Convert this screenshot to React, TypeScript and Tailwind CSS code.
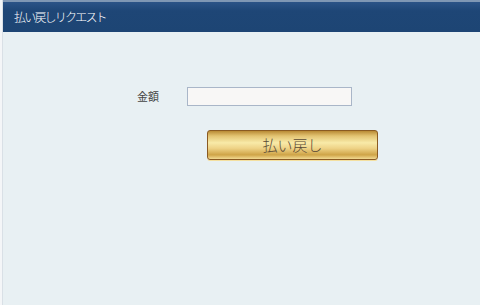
export default function App() {
  return (
    <div
      className="flex h-[305px] w-[480px] bg-[#e8f0f3]"
      style={{ fontFamily: '"Noto Sans CJK JP", "Liberation Sans", sans-serif' }}
    >
      {/* left edge strip */}
      <div className="w-[3px] shrink-0 border-r border-[#d9e0e6] bg-[#f4f6f8]" />
      <div className="flex flex-1 flex-col">
        <div className="h-[2px] bg-[#7f97b4]" />
        <div className="flex h-[30px] items-center bg-[linear-gradient(to_bottom,#2b5387,#1e4676_30%,#1d4574)] pl-[11px] text-[12px] font-light tracking-[-1.8px] text-white">
          払い戻しリクエスト
        </div>
        <div className="flex flex-col items-start pl-[134px] pt-[55px]">
          <div className="flex items-center">
            <span className="w-[50px] text-[11px] text-[#444]">金額</span>
            <input
              type="text"
              className="h-[19px] w-[165px] border border-[#a9b6c8] bg-[#f8f7f6] outline-none"
            />
          </div>
          <button
            type="button"
            className="ml-[70px] mt-[24px] flex h-[30px] w-[171px] items-center justify-center rounded-[3px] border border-[#8a5a22] bg-[linear-gradient(to_bottom,#b98a35_0%,#e3c473_18%,#f8eaa8_42%,#eed286_62%,#cfa447_85%,#f2da92_100%)] text-[15px] font-light text-[#5a4a35] shadow-[0_1px_0_#f4e0a0]"
          >
            払い戻し
          </button>
        </div>
      </div>
    </div>
  )
}
